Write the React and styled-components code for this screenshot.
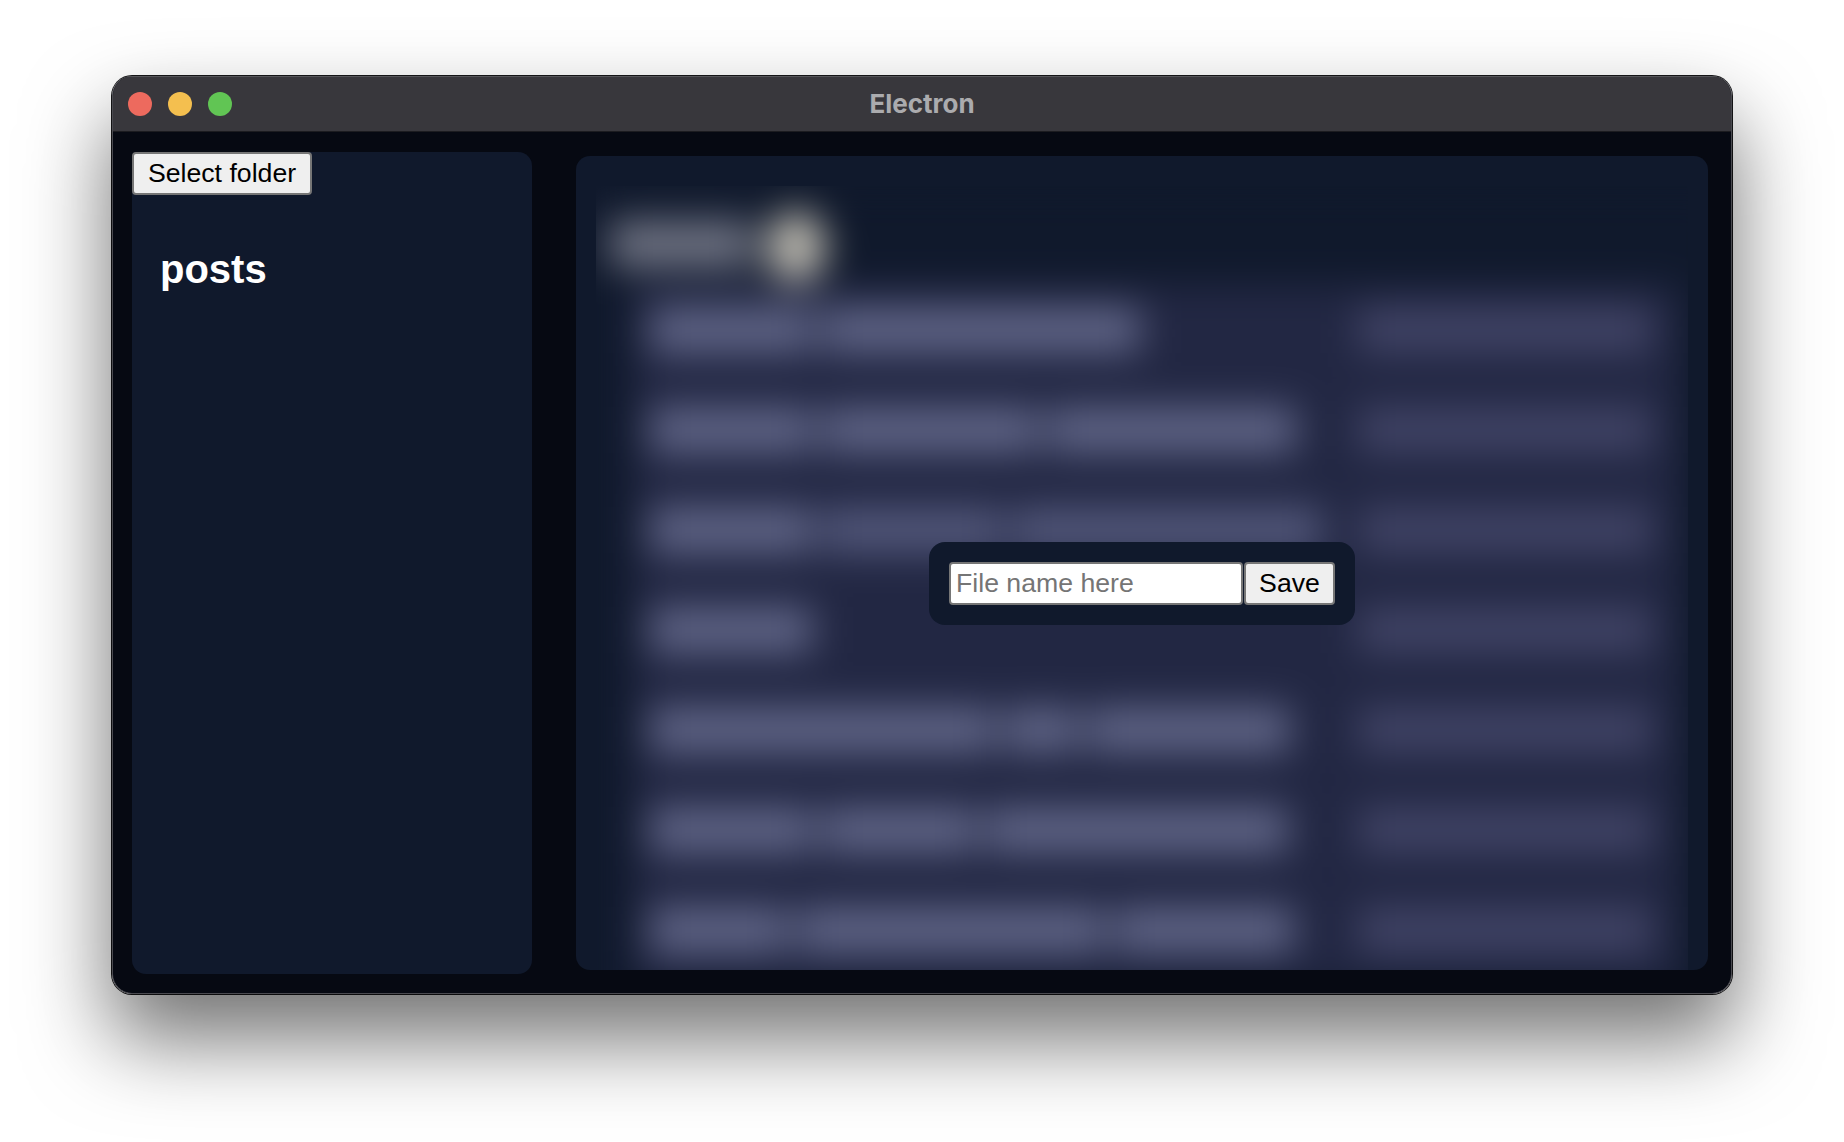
import React from "react";
import styled, { createGlobalStyle } from "styled-components";

const Global = createGlobalStyle`
  html, body { margin: 0; padding: 0; background: #fff; }
  #root { width: 1844px; height: 1142px; overflow: hidden; }
  * { box-sizing: border-box; }
`;

const Page = styled.div`
  width: 1844px;
  height: 1142px;
  padding: 76px 0 0 112px;
  background: #fff;
  font-family: "Liberation Sans", Arial, sans-serif;
`;

const Frame = styled.div`
  width: 1620px;
  height: 918px;
  border-radius: 20px;
  box-shadow: 0 44px 84px 2px rgba(0, 0, 0, 0.55), 0 0 0 1px #161618;
`;

const Win = styled.div`
  width: 100%;
  height: 100%;
  display: flex;
  flex-direction: column;
  background: #060912;
  border-radius: 20px;
  border: 1px solid #4a4a50;
  border-top: none;
  overflow: hidden;
`;

const TitleBar = styled.div`
  position: relative;
  flex: 0 0 56px;
  display: flex;
  align-items: center;
  justify-content: center;
  background: #38373c;
  border-top: 1px solid #56565a;
  border-bottom: 1px solid #1c1c20;
`;

const Lights = styled.div`
  position: absolute;
  left: 15px;
  top: 15px;
  display: flex;
  gap: 16px;
`;

const Light = styled.span`
  width: 24px;
  height: 24px;
  border-radius: 50%;
  background: ${(p) => p.$color};
`;

const Title = styled.div`
  font-family: Inter, "Liberation Sans", sans-serif;
  font-weight: 700;
  font-size: 26px;
  color: #ababae;
  margin-top: -2px;
`;

const Body = styled.div`
  flex: 1;
  min-height: 0;
  display: flex;
  gap: 44px;
  padding: 20px 23px 19px 19px;
`;

const Sidebar = styled.aside`
  flex: 0 0 400px;
  background: #10192c;
  border-radius: 14px;
  display: flex;
  flex-direction: column;
  align-items: flex-start;
`;

const Button = styled.button`
  font-family: "Liberation Sans", Arial, sans-serif;
  font-size: 26.67px;
  color: #000;
  background: #efefef;
  border: 2px solid #767676;
  border-radius: 4px;
  padding: 0;
  height: 43px;
  width: ${(p) => p.$width}px;
`;

const Folder = styled.h2`
  margin: 0;
  padding: 50px 0 0 28px;
  font-size: 40px;
  font-weight: 700;
  line-height: 48px;
  color: #fff;
`;

const Main = styled.main`
  position: relative;
  flex: 1;
  margin: 4px 0;
  padding: 30px 20px 0;
  background: #10192c;
  border-radius: 14px;
  display: flex;
  overflow: hidden;
`;

const Clip = styled.div`
  flex: 1;
  overflow: hidden;
`;

const Blurred = styled.div`
  width: 1140px;
  filter: blur(19px);
  background: #10192c;
  height: 830px;
  margin-left: -10px;
  padding: 20px 0 0 24px;
`;

const Heading = styled.div`
  display: flex;
  align-items: center;
  gap: 14px;
  height: 76px;
`;

const HeadingBar = styled.span`
  width: 142px;
  height: 48px;
  background: #6e7282;
`;

const Orb = styled.span`
  width: 60px;
  height: 72px;
  margin-top: 6px;
  border-radius: 50%;
  background: #bdbab0;
`;

const Table = styled.div`
  margin: 3px 0 0 22px;
  width: 1048px;
  background: #222743;
  padding-top: 2px;
`;

const Row = styled.div`
  height: 100px;
  padding: 20px 28px 0 18px;
  display: flex;
  justify-content: space-between;
`;

const Chunks = styled.div`
  display: flex;
  gap: 10px;
`;

const Chunk = styled.span`
  height: 46px;
  width: ${(p) => p.$w}px;
  background: ${(p) => (p.$dim ? "#52577a" : "#5f6486")};
`;

const Dim = styled.span`
  height: 46px;
  width: 294px;
  background: #404365;
`;

const Modal = styled.div`
  position: absolute;
  left: 353px;
  top: 386px;
  display: flex;
  gap: 1px;
  padding: 20px;
  background: #10192c;
  border-radius: 16px;
`;

const Input = styled.input`
  width: 294px;
  height: 43px;
  font-family: "Liberation Sans", Arial, sans-serif;
  font-size: 26.67px;
  padding: 0 5px;
  color: #000;
  background: #fff;
  border: 2px solid #767676;
  border-radius: 4px;
  outline: none;
  &::placeholder { color: #757575; opacity: 1; }
`;

const rows = [
  { chunks: [162, 318] },
  { chunks: [162, 216, 248] },
  { chunks: [162, 180, 310], dim: true },
  { chunks: [162] },
  { chunks: [344, 74, 202] },
  { chunks: [162, 154, 302] },
  { chunks: [138, 306, 180] },
];

export default function App() {
  return (
    <Page>
      <Global />
      <Frame>
        <Win>
          <TitleBar>
            <Lights>
              <Light $color="#ed6a5e" />
              <Light $color="#f4bf4f" />
              <Light $color="#61c554" />
            </Lights>
            <Title>Electron</Title>
          </TitleBar>
          <Body>
            <Sidebar>
              <Button $width={180}>Select folder</Button>
              <Folder>posts</Folder>
            </Sidebar>
            <Main>
              <Clip>
                <Blurred>
                  <Heading>
                    <HeadingBar />
                    <Orb />
                  </Heading>
                  <Table>
                    {rows.map((row, i) => (
                      <Row key={i}>
                        <Chunks>
                          {row.chunks.map((w, j) => (
                            <Chunk key={j} $w={w} $dim={row.dim && j > 0} />
                          ))}
                        </Chunks>
                        <Dim />
                      </Row>
                    ))}
                  </Table>
                </Blurred>
              </Clip>
              <Modal>
                <Input placeholder="File name here" />
                <Button $width={91}>Save</Button>
              </Modal>
            </Main>
          </Body>
        </Win>
      </Frame>
    </Page>
  );
}
